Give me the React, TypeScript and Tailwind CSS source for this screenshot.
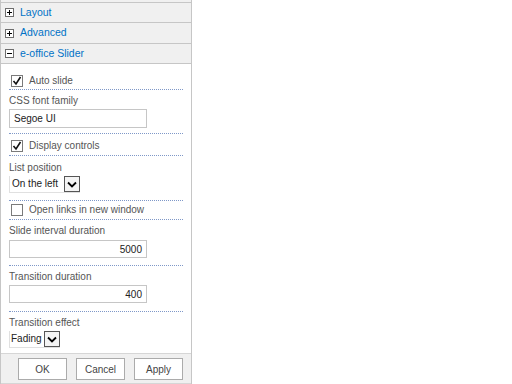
import React from "react"

function Toggle({ open }: { open?: boolean }) {
  return (
    <svg width="9" height="9" viewBox="0 0 9 9" className="shrink-0">
      <rect x="0.5" y="0.5" width="8" height="8" fill="#fff" stroke="#6d6d6d" />
      <path d="M2 4.5h5" stroke="#000" strokeWidth="1" />
      {!open && <path d="M4.5 2v5" stroke="#000" strokeWidth="1" />}
    </svg>
  )
}

function Check({ checked }: { checked?: boolean }) {
  return (
    <svg width="12" height="12" viewBox="0 0 12 12" className="shrink-0">
      <rect x="0.5" y="0.5" width="11" height="11" fill="#fff" stroke="#7a7a7a" />
      {checked && (
        <path d="M2.5 6l2.5 3 4.5-7" fill="none" stroke="#111" strokeWidth="1.6" />
      )}
    </svg>
  )
}

function Arrow() {
  return (
    <div className="w-[16px] h-[16px] border border-[#555] bg-[#f4f4f4] flex items-center justify-center shrink-0">
      <svg width="10" height="7" viewBox="0 0 10 7">
        <path d="M1 1.5l4 4 4-4" fill="none" stroke="#000" strokeWidth="1.8" />
      </svg>
    </div>
  )
}

function Header({ label, open, h }: { label: string; open?: boolean; h: string }) {
  return (
    <div className={`${h} border-t border-[#c6c6c6] bg-[#f0f0f0] flex items-center gap-[6px] pl-[4px]`}>
      <Toggle open={open} />
      <span className="text-[#0072c6] text-[10.5px]">{label}</span>
    </div>
  )
}

const dotted = "mx-[8px] border-b border-dotted border-[#7f98c8]"

export default function App() {
  return (
    <div className="w-[512px] h-[384px] bg-white font-['Liberation_Sans',Arial,sans-serif] text-[10px] text-[#555]">
      <div className="w-[192px] h-[384px] border-l border-r border-[#c6c6c6] flex flex-col">
        <div className="h-[2px] bg-[#f0f0f0]" />
        <Header label="Layout" h="h-[20px]" />
        <Header label="Advanced" h="h-[21px]" />
        <Header label="e-office Slider" open h="h-[20px]" />

        <div className="border-t border-[#c6c6c6] flex-1 flex flex-col">
          {/* auto slide */}
          <div className={`${dotted} pt-[11px] flex items-start gap-[6px] pl-[2px] h-[26px]`}>
            <Check checked />
            <span className="leading-[12px]">Auto slide</span>
          </div>

          {/* css font family */}
          <div className={`${dotted} h-[44px] pt-[4px]`}>
            <div className="leading-[14px]">CSS font family</div>
            <div className="mt-[1px] w-[138px] h-[19px] border border-[#c6c6c6] flex items-center px-[4px] text-[#222]">Segoe UI</div>
          </div>

          {/* display controls */}
          <div className={`${dotted} h-[22px] pt-[6px] flex items-start gap-[6px] pl-[2px]`}>
            <Check checked />
            <span className="leading-[12px]">Display controls</span>
          </div>

          {/* list position */}
          <div className={`${dotted} h-[45px] pt-[5px]`}>
            <div className="leading-[14px]">List position</div>
            <div className="mt-[1px] flex items-center w-fit border-l border-b border-[#e0e0e0]">
              <span className="px-[2px] w-[54px] whitespace-nowrap text-[#222] leading-[16px]">On the left</span>
              <Arrow />
            </div>
          </div>

          {/* open links */}
          <div className={`${dotted} h-[19px] pt-[3px] flex items-start gap-[6px] pl-[2px]`}>
            <Check />
            <span className="leading-[12px]">Open links in new window</span>
          </div>

          {/* slide interval */}
          <div className={`${dotted} h-[46px] pt-[4px]`}>
            <div className="leading-[14px]">Slide interval duration</div>
            <div className="mt-[2px] w-[138px] h-[18px] border border-[#c6c6c6] flex items-center justify-end px-[4px] text-[#222]">5000</div>
          </div>

          {/* transition duration */}
          <div className={`${dotted} h-[46px] pt-[4px]`}>
            <div className="leading-[14px]">Transition duration</div>
            <div className="mt-[1px] w-[138px] h-[18px] border border-[#c6c6c6] flex items-center justify-end px-[4px] text-[#222]">400</div>
          </div>

          {/* transition effect */}
          <div className="mx-[8px] pt-[4px]">
            <div className="leading-[14px]">Transition effect</div>
            <div className="mt-[1px] flex items-center w-fit border-l border-b border-[#e0e0e0]">
              <span className="pl-[1px] pr-[1px] w-[34px] whitespace-nowrap text-[#222] leading-[16px]">Fading</span>
              <Arrow />
            </div>
          </div>
        </div>

        {/* footer buttons */}
        <div className="h-[31px] bg-[#f0f0f0] border-t border-b border-[#d6d6d6] flex items-start pt-[4px] pl-[17px] gap-[9px]">
          <button className="w-[49px] h-[22px] bg-white border border-[#ababab] text-[#444] text-[10px]">OK</button>
          <button className="w-[49px] h-[22px] bg-white border border-[#ababab] text-[#444] text-[10px]">Cancel</button>
          <button className="w-[49px] h-[22px] bg-white border border-[#ababab] text-[#444] text-[10px]">Apply</button>
        </div>
      </div>
    </div>
  )
}
